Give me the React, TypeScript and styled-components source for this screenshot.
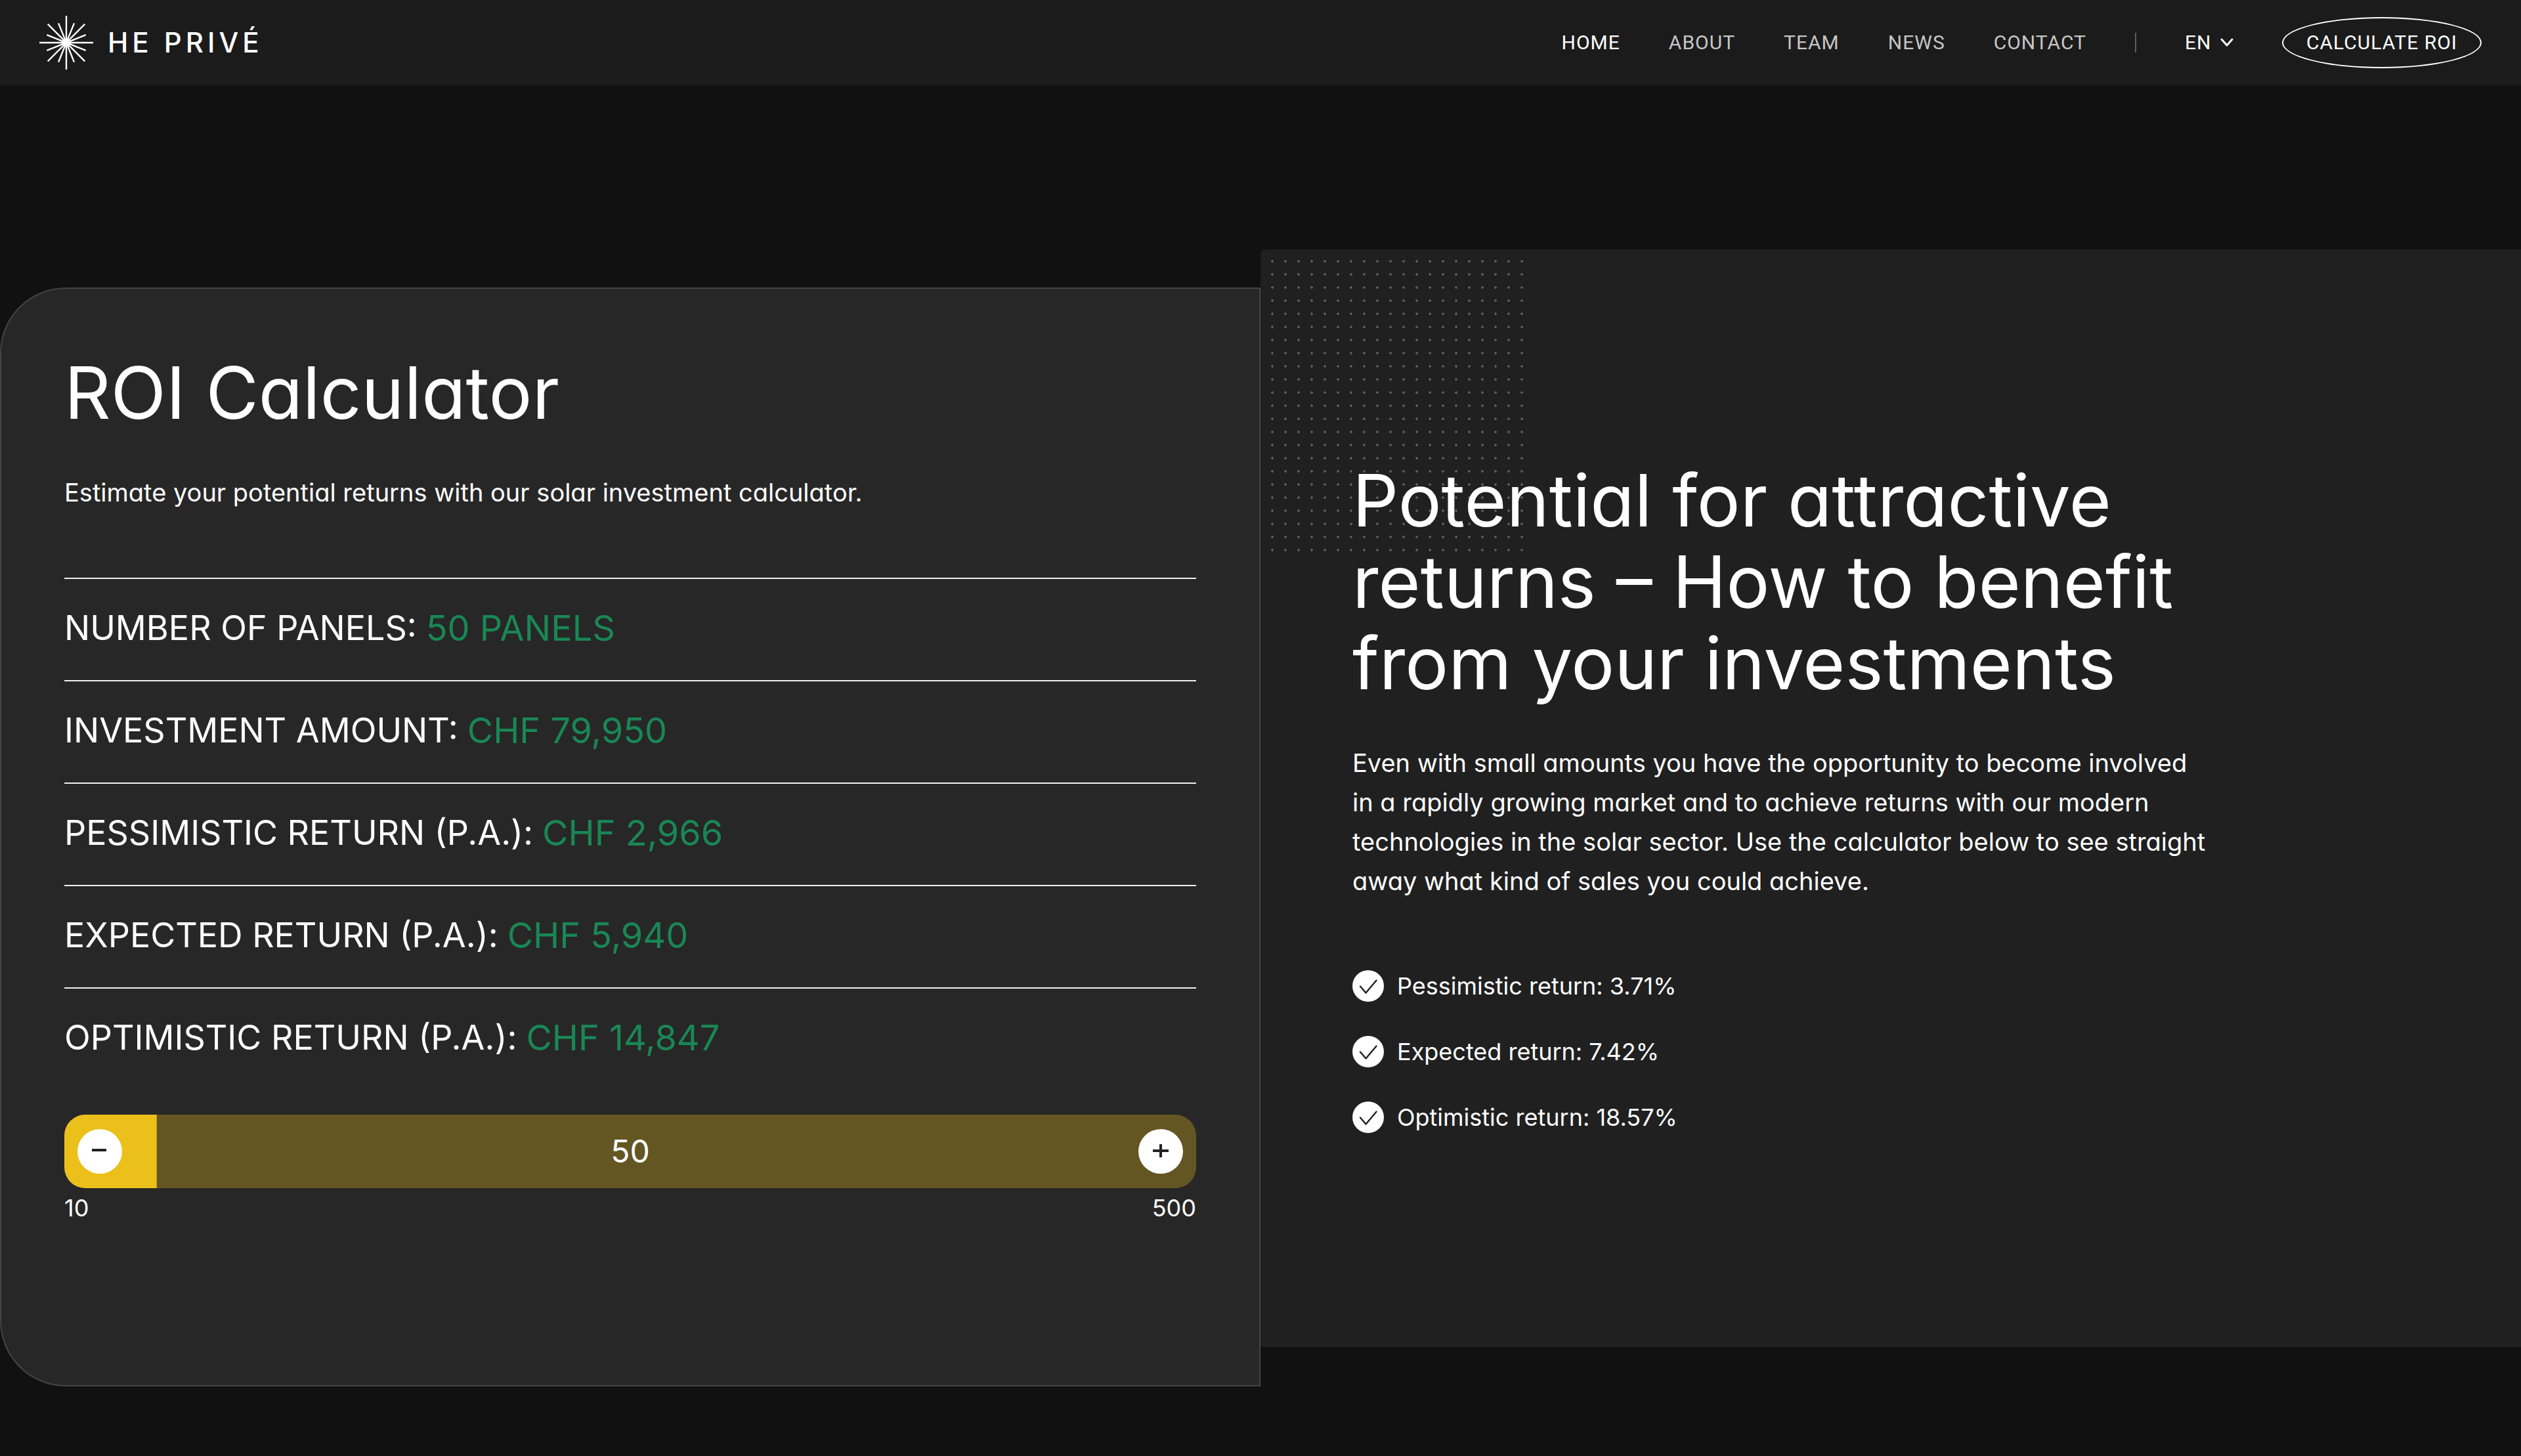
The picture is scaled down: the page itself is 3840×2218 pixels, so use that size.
import { useState } from "react";
import type { CSSProperties } from "react";
import styled, { createGlobalStyle } from "styled-components";

const GlobalStyle = createGlobalStyle`
  *, *::before, *::after { box-sizing: border-box; }
  body {
    margin: 0;
    background: #111;
    color: #fff;
    font-family: Inter, "Liberation Sans", sans-serif;
    font-feature-settings: "cv11" 1;
    font-size: 36px;
    line-height: 60px;
  }
  h1, h2, p, ul, dl, dd { margin: 0; padding: 0; }
`;

const Header = styled.header`
  display: flex;
  align-items: center;
  justify-content: space-between;
  height: 130px;
  padding: 0 60px;
  background: #1b1b1b;
`;

const Logo = styled.a`
  display: flex;
  align-items: center;
  gap: 22px;
  color: #fff;
  text-decoration: none;
  font-size: 42px;
  font-weight: 500;
  letter-spacing: 6px;
`;

const Nav = styled.nav`
  display: flex;
  align-items: center;
  gap: 74px;
  font-family: Roboto, "Liberation Sans", sans-serif;
  font-size: 30px;
  line-height: 40px;
  letter-spacing: 1px;
`;

const NavLink = styled.a<{ $active?: boolean }>`
  color: ${(p) => (p.$active ? "#fff" : "#c6c6c6")};
  text-decoration: none;
`;

const Divider = styled.span`
  width: 2px;
  height: 30px;
  background: #5c5c5c;
`;

const Language = styled.label`
  display: flex;
  align-items: center;
  gap: 14px;
`;

const LanguageSelect = styled.select`
  appearance: none;
  width: 40px;
  padding: 0;
  border: 0;
  background: none;
  color: #fff;
  font: inherit;
  letter-spacing: inherit;
`;

const RoiButton = styled.button`
  width: 304px;
  height: 78px;
  padding: 0;
  border: 2px solid #fff;
  border-radius: 50%;
  background: none;
  color: #fff;
  font: inherit;
  letter-spacing: inherit;
`;

const Section = styled.main`
  display: grid;
  grid-template-columns: 1fr 1fr;
  padding: 250px 0 104px;
`;

const Calculator = styled.section`
  margin-top: 58px;
  padding: 96px 96px 240px;
  border: 2px solid #444;
  border-radius: 100px 0 0 100px;
  background: #272727;
`;

const Title = styled.h1`
  font-size: 110px;
  font-weight: 400;
  line-height: 124px;
`;

const Intro = styled.p`
  padding: 60px 0 100px;
  font-size: 38px;
`;

const Figures = styled.dl`
  font-size: 52px;
  line-height: 150px;
  text-transform: uppercase;
`;

const Figure = styled.div`
  display: flex;
  gap: 14px;
  padding-bottom: 4px;
  border-top: 2px solid #f0f0f0;
`;

const FigureValue = styled.dd`
  color: #198754;
  font-size: 54px;
`;

const Stepper = styled.div`
  display: grid;
  grid-template-columns: 68px 1fr 68px;
  align-items: center;
  height: 112px;
  margin-top: 38px;
  padding: 0 20px;
  border-radius: 32px;
  overflow: hidden;
  position: relative;
`;

const Track = styled.input`
  appearance: none;
  position: absolute;
  inset: 0;
  width: 100%;
  height: 100%;
  margin: 0;
  background: linear-gradient(#ebc01a, #ebc01a) 0 0 / var(--fill) 100% no-repeat #645623;
  &::-webkit-slider-thumb { appearance: none; width: 1px; height: 112px; }
`;

const RoundButton = styled.button`
  display: grid;
  place-items: center;
  position: relative;
  width: 68px;
  height: 68px;
  padding: 0;
  border: 0;
  border-radius: 50%;
  background: #fff;
  color: #222;
`;

const StepperValue = styled.output`
  position: relative;
  font-size: 48px;
  text-align: center;
  pointer-events: none;
`;

const Limits = styled.div`
  display: flex;
  justify-content: space-between;
`;

const Benefits = styled.section`
  display: flex;
  flex-direction: column;
  justify-content: center;
  margin-bottom: 60px;
  padding: 0 140px;
  border-top-left-radius: 8px;
  background: #202020;
  position: relative;
`;

const Dots = styled.div`
  position: absolute;
  top: 8px;
  left: 8px;
  width: 400px;
  height: 460px;
  background: radial-gradient(circle, #5a5a5a 2px, transparent 2px) 0 0 / 20px 20px;
`;

const Copy = styled.div`
  max-width: 1300px;
  position: relative;
`;

const Lead = styled.p`
  padding: 60px 0 100px;
  font-size: 38px;
`;

const Rates = styled.ul`
  display: grid;
  gap: 40px;
  list-style: none;
`;

const Rate = styled.li`
  display: flex;
  align-items: center;
  gap: 20px;
`;

const StarIcon = () => {
  const rays = [
    [0, 41], [22, 32], [45, 40], [68, 32], [90, 41], [112, 32], [135, 40], [158, 32],
  ];
  return (
    <svg width="82" height="82" viewBox="-41 -41 82 82" stroke="#fff" strokeWidth="2.4" aria-hidden="true">
      {rays.map(([angle, r]) => (
        <line key={angle} x1={-r} x2={r} y1="0" y2="0" transform={`rotate(${angle})`} />
      ))}
      <circle r="6.5" fill="#fff" stroke="none" />
    </svg>
  );
};

const Chevron = () => (
  <svg width="20" height="14" viewBox="0 0 20 14" fill="none" stroke="#fff" strokeWidth="3" strokeLinecap="round" strokeLinejoin="round" aria-hidden="true">
    <path d="M2 2l8 9 8-9" />
  </svg>
);

const Check = () => (
  <svg width="48" height="48" viewBox="0 0 48 48" fill="none" aria-hidden="true">
    <circle cx="24" cy="24" r="24" fill="#fff" />
    <path d="M12 24.500l8.500 10L36.500 15.500" stroke="#202020" strokeWidth="2.400" strokeLinecap="round" strokeLinejoin="round" />
  </svg>
);

const MIN = 10;
const MAX = 500;
const PANEL_PRICE = 1599;
const chf = (n: number) => "CHF " + Math.round(n).toLocaleString("en-US");

const links = ["Home", "About", "Team", "News", "Contact"];
const rates = ["Pessimistic return: 3.71%", "Expected return: 7.42%", "Optimistic return: 18.57%"];

export default function App() {
  const [panels, setPanels] = useState(50);
  const amount = panels * PANEL_PRICE;
  const change = (n: number) => setPanels(Math.min(MAX, Math.max(MIN, n)));
  const fill = ((panels - MIN) / (MAX - MIN)) * 100;
  const figures = [
    ["Number of panels:", `${panels} panels`],
    ["Investment amount:", chf(amount)],
    ["Pessimistic return (p.a.):", chf(amount * 0.0371)],
    ["Expected return (p.a.):", chf(amount * 0.0743)],
    ["Optimistic return (p.a.):", chf(amount * 0.1857)],
  ];

  return (
    <>
      <GlobalStyle />
      <Header>
        <Logo href="#home">
          <StarIcon />
          HE PRIVÉ
        </Logo>
        <Nav>
          {links.map((label, i) => (
            <NavLink key={label} href={`#${label.toLowerCase()}`} $active={i === 0}>
              {label.toUpperCase()}
            </NavLink>
          ))}
          <Divider />
          <Language>
            <LanguageSelect aria-label="Language" defaultValue="EN">
              <option>EN</option>
              <option>DE</option>
            </LanguageSelect>
            <Chevron />
          </Language>
          <RoiButton type="button">CALCULATE ROI</RoiButton>
        </Nav>
      </Header>
      <Section>
        <Calculator>
          <Title>ROI Calculator</Title>
          <Intro>Estimate your potential returns with our solar investment calculator.</Intro>
          <Figures>
            {figures.map(([label, value]) => (
              <Figure key={label}>
                <dt>{label}</dt>
                <FigureValue>{value}</FigureValue>
              </Figure>
            ))}
          </Figures>
          <Stepper>
            <Track
              type="range"
              aria-label="Number of panels"
              min={MIN}
              max={MAX}
              value={panels}
              onChange={(e) => change(Number(e.target.value))}
              style={{ "--fill": `${fill}%` } as CSSProperties}
            />
            <RoundButton type="button" aria-label="Fewer panels" onClick={() => change(panels - 1)}>
              <svg width="24" height="24" viewBox="0 0 24 24" stroke="currentColor" strokeWidth="4" aria-hidden="true">
                <path d="M0 10h22" />
              </svg>
            </RoundButton>
            <StepperValue>{panels}</StepperValue>
            <RoundButton type="button" aria-label="More panels" onClick={() => change(panels + 1)}>
              <svg width="24" height="24" viewBox="0 0 24 24" stroke="currentColor" strokeWidth="4" aria-hidden="true">
                <path d="M0 11h24M12 1v20" />
              </svg>
            </RoundButton>
          </Stepper>
          <Limits>
            <span>{MIN}</span>
            <span>{MAX}</span>
          </Limits>
        </Calculator>
        <Benefits>
          <Dots />
          <Copy>
            <Title as="h2">Potential for attractive returns – How to benefit from your investments</Title>
            <Lead>
              Even with small amounts you have the opportunity to become involved in a rapidly growing market and to
              achieve returns with our modern technologies in the solar sector. Use the calculator below to see
              straight away what kind of sales you could achieve.
            </Lead>
            <Rates>
              {rates.map((text) => (
                <Rate key={text}>
                  <Check />
                  {text}
                </Rate>
              ))}
            </Rates>
          </Copy>
        </Benefits>
      </Section>
    </>
  );
}
